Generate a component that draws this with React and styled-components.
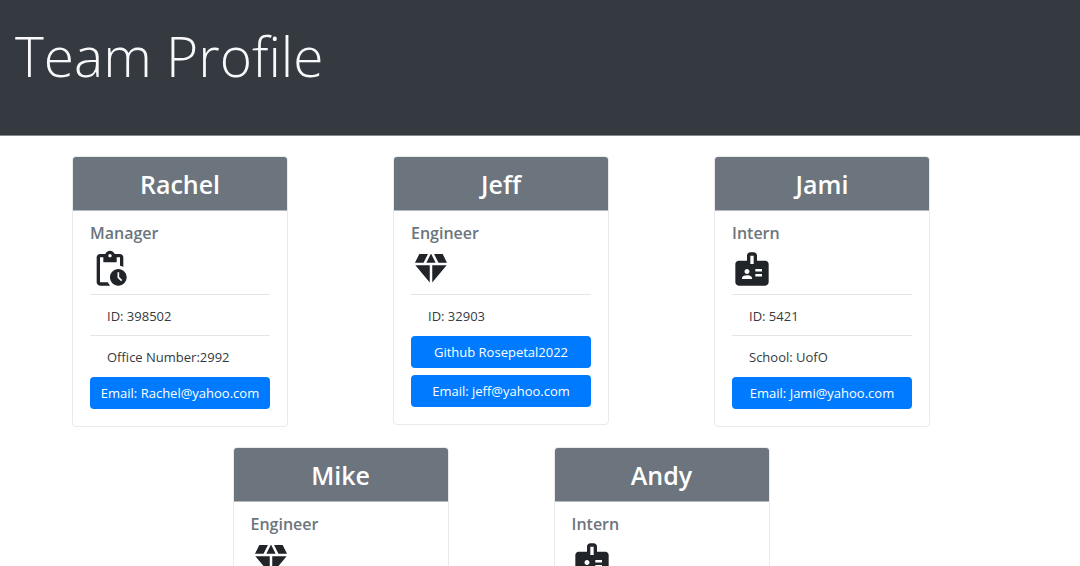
import React from 'react';
import styled, { createGlobalStyle } from 'styled-components';
import { MdPendingActions, MdDiamond, MdBadge } from 'react-icons/md';

const GlobalStyle = createGlobalStyle`
  *, *::before, *::after { box-sizing: border-box; }
  body {
    margin: 0;
    background: #fff;
    color: #343a40;
    font-family: "Segoe UI", "Open Sans", "Noto Sans", sans-serif;
    font-size: 13px;
    line-height: 20px;
  }
`;

const Banner = styled.header`
  padding: 20px 15px 44px;
  background: #343a40;
  border-bottom: 1px solid #85898d;
`;

const Title = styled.h1`
  margin: 0;
  color: #f8f9fa;
  font-size: 55px;
  font-weight: 300;
  line-height: 71px;
`;

const Team = styled.main`
  display: flex;
  flex-wrap: wrap;
  justify-content: center;
  align-items: flex-start;
  gap: 20px 105px;
  padding: 20px 78px 20px 0;
`;

const Card = styled.article`
  width: 216px;
  border: 1px solid #e9eaeb;
  border-radius: 4px;
  overflow: hidden;
`;

const Name = styled.h2`
  margin: -1px -1px 0;
  padding: 13px 17px 11px;
  background: #6c757d;
  border-bottom: 1px solid #b4b9bd;
  color: #fff;
  font-size: 25px;
  font-weight: 600;
  line-height: 30px;
  text-align: center;
`;

const Body = styled.div`
  padding: 11px 17px 17px;
`;

const Role = styled.h3`
  margin: 0;
  color: #6c757d;
  font-size: 16px;
  font-weight: 600;
  line-height: 22px;
`;

const RoleIcon = styled.div`
  height: 50px;
  padding-top: 5px;
  color: #212529;

  svg { display: block; }
`;

const Facts = styled.ul`
  margin: 0;
  padding: 0 0 1px;
  list-style: none;
`;

const Fact = styled.li`
  padding: 11px 17px 9px;
  border-top: 1px solid #e6e6e7;
`;

const Links = styled.div`
  display: flex;
  flex-direction: column;
  gap: 7px;
`;

const LinkButton = styled.a`
  padding: 6px 8px;
  border-radius: 4px;
  background: #007bff;
  color: #fff;
  text-align: center;
  text-decoration: none;
  white-space: nowrap;
`;

const icons = { Manager: MdPendingActions, Engineer: MdDiamond, Intern: MdBadge };

const members = [
  { name: 'Rachel', role: 'Manager', facts: ['ID: 398502', 'Office Number:2992'], email: 'Rachel@yahoo.com' },
  { name: 'Jeff', role: 'Engineer', facts: ['ID: 32903'], github: 'Rosepetal2022', email: 'jeff@yahoo.com' },
  { name: 'Jami', role: 'Intern', facts: ['ID: 5421', 'School: UofO'], email: 'Jami@yahoo.com' },
  { name: 'Mike', role: 'Engineer', facts: [] },
  { name: 'Andy', role: 'Intern', facts: [] },
];

function Member({ name, role, facts, github, email }) {
  const Icon = icons[role];
  return (
    <Card>
      <Name>{name}</Name>
      <Body>
        <Role>{role}</Role>
        <RoleIcon><Icon size={40} aria-hidden="true" /></RoleIcon>
        <Facts>
          {facts.map((fact) => <Fact key={fact}>{fact}</Fact>)}
        </Facts>
        <Links>
          {github && <LinkButton href={`https://github.com/${github}`}>Github {github}</LinkButton>}
          {email && <LinkButton href={`mailto:${email}`}>Email: {email}</LinkButton>}
        </Links>
      </Body>
    </Card>
  );
}

export default function App() {
  return (
    <>
      <GlobalStyle />
      <Banner>
        <Title>Team Profile</Title>
      </Banner>
      <Team>
        {members.map((member) => <Member key={member.name} {...member} />)}
      </Team>
    </>
  );
}
